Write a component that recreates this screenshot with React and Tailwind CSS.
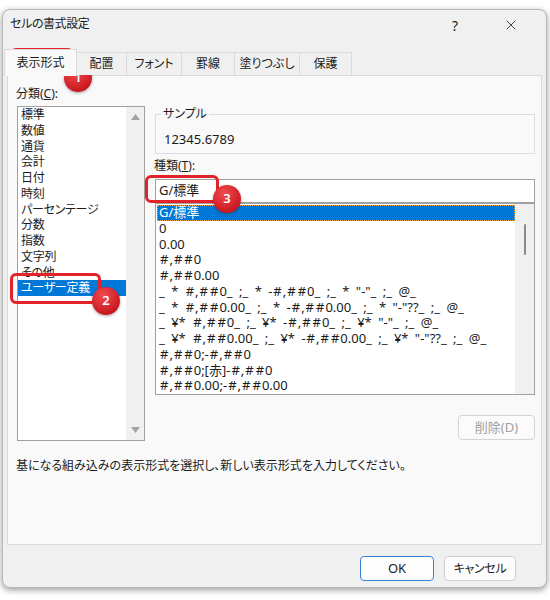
import React from 'react';
import { X } from 'lucide-react';

const categories = [
  '標準', '数値', '通貨', '会計', '日付', '時刻', 'パーセンテージ',
  '分数', '指数', '文字列', 'その他', 'ユーザー定義',
];

const formats = [
  'G/標準',
  '0',
  '0.00',
  '#,##0',
  '#,##0.00',
  '_ * #,##0_ ;_ * -#,##0_ ;_ * "-"_ ;_ @_',
  '_ * #,##0.00_ ;_ * -#,##0.00_ ;_ * "-"??_ ;_ @_',
  '_ ¥* #,##0_ ;_ ¥* -#,##0_ ;_ ¥* "-"_ ;_ @_',
  '_ ¥* #,##0.00_ ;_ ¥* -#,##0.00_ ;_ ¥* "-"??_ ;_ @_',
  '#,##0;-#,##0',
  '#,##0;[赤]-#,##0',
  '#,##0.00;-#,##0.00',
];

const tabs = [
  { label: '表示形式', w: 'w-[73px]', active: true },
  { label: '配置', w: 'w-[51px]' },
  { label: 'フォント', w: 'w-[56px]' },
  { label: '罫線', w: 'w-[54px]' },
  { label: '塗りつぶし', w: 'w-[66px]' },
  { label: '保護', w: 'w-[53px]' },
];

// '#' is drawn wide in the dialog font, pad it out a little
function FormatText({ text }) {
  const parts = text.split('#');
  return (
    <>
      {parts.map((p, i) => (
        <React.Fragment key={i}>
          {i > 0 && <span className="mx-[1px]">#</span>}
          {p}
        </React.Fragment>
      ))}
    </>
  );
}

function Marker({ n, className }) {
  return (
    <div
      className={`absolute w-[28px] h-[28px] rounded-full flex items-center justify-center text-white text-[13px] font-semibold bg-[radial-gradient(circle_at_40%_30%,#ef4b4f,#c8161d_75%)] shadow-[0_1px_3px_rgba(0,0,0,0.35)] ${className}`}
    >
      {n}
    </div>
  );
}

function Arrow({ up }) {
  return (
    <svg width="9" height="6" viewBox="0 0 9 6">
      <path d={up ? 'M0 6 L4.5 0 L9 6 Z' : 'M0 0 L4.5 6 L9 0 Z'} fill="#a3a3a3" />
    </svg>
  );
}

export default function App() {
  return (
    <div className="relative w-[550px] h-[600px] bg-white overflow-hidden pt-[9px] pl-[2px] text-[12px] text-[#1b1b1b] [font-family:'Noto_Sans','Noto_Sans_CJK_JP',sans-serif] [font-feature-settings:'palt']">
      <div className="w-[545px] h-[579px] bg-[#f0f0f0] rounded-[8px] border border-[#b9b9b9] shadow-[0_2px_6px_rgba(0,0,0,0.4)] flex flex-col overflow-hidden">
        {/* title bar */}
        <div className="h-[39px] flex items-start pr-[7px]">
          <div className="pl-[7px] pt-[6px] leading-[16px] flex-1 tracking-[-0.4px]">セルの書式設定</div>
          <div className="w-[56px] h-[30px] flex items-center justify-center text-[14px]">?</div>
          <div className="w-[56px] h-[30px] flex items-center justify-center">
            <X size={16} strokeWidth={1.2} color="#1b1b1b" />
          </div>
        </div>

        {/* tabs */}
        <div className="h-[26px] flex items-end pl-[1px] relative z-10">
          {tabs.map((t) => (
            <div
              key={t.label}
              className={`${t.w} flex items-center justify-center whitespace-nowrap border-t border-l border-r border-[#d9d9d9] -ml-px first:ml-0 ${
                t.active ? 'h-[27px] -mb-px bg-[#f9f9f9] border-b-0' : 'h-[23px] bg-[#f0f0f0]'
              }`}
            >
              {t.label}
            </div>
          ))}
        </div>

        {/* panel */}
        <div className="mx-[4px] h-[470px] border border-[#d9d9d9] bg-[#f9f9f9]">
          <div className="flex pl-[9px] pt-[8px]">
            <div className="w-[128px]">
              <div className="h-[20px] leading-[20px] -ml-px">
                分類(<span className="underline">C</span>):
              </div>
              <div className="mt-[2px] h-[335px] border border-[#a0a0a0] bg-white flex">
                <div className="flex-1">
                  {categories.map((c, i) => (
                    <div
                      key={c}
                      className={`h-[15.75px] leading-[15.75px] pl-[3px] whitespace-nowrap tracking-[-0.3px] ${
                        i === categories.length - 1 ? 'bg-[#0078d7] text-white' : ''
                      }`}
                    >
                      {c}
                    </div>
                  ))}
                </div>
                <div className="w-[18px] bg-[#f0f0f0] flex flex-col items-center justify-between py-[7px]">
                  <Arrow up />
                  <Arrow />
                </div>
              </div>
            </div>

            <div className="ml-[10px] w-[380px] mt-[22px] flex flex-col">
              <fieldset className="h-[48px] border border-[#dcdcdc] px-[8px] pb-[5px]">
                <legend className="leading-[16px] ml-[-3px] px-[2px]">サンプル</legend>
                <div className="mt-[9px] leading-[16px] text-[13px]">12345.6789</div>
              </fieldset>

              <div className="mt-[2px] h-[20px] leading-[20px] -ml-px">
                種類(<span className="underline">T</span>):
              </div>
              <div className="mt-[3px] h-[24px] border border-[#a0a0a0] bg-white flex items-center pl-[3px] text-[13px]">
                G/標準
              </div>
              <div className="h-[192px] border border-[#a0a0a0] bg-white flex text-[13px]">
                <div className="flex-1 pt-[1px] overflow-hidden">
                  {formats.map((f, i) => (
                    <div
                      key={f}
                      className={`h-[15.75px] leading-[15.75px] pl-[2px] ml-px whitespace-nowrap [word-spacing:3px] ${
                        i === 0
                          ? 'bg-[#0078d7] text-white outline outline-1 outline-dotted outline-[#f2a33a] -outline-offset-1'
                          : ''
                      }`}
                    >
                      <FormatText text={f} />
                    </div>
                  ))}
                </div>
                <div className="w-[19px] bg-[#f0f0f0] flex justify-center pt-[20px]">
                  <div className="w-[2px] h-[31px] rounded-full bg-[#8a8a8a]" />
                </div>
              </div>

              <button className="mt-[20px] self-end w-[77px] h-[25px] rounded-[4px] border border-[#d4d4d4] bg-[#fbfbfb] text-[#a0a0a0] text-[13px]">
                削除(D)
              </button>
            </div>
          </div>

          <div className="mt-[17px] pl-[8px] leading-[16px] whitespace-nowrap">
            基になる組み込みの表示形式を選択し、新しい表示形式を入力してください。
          </div>
        </div>

        {/* footer buttons */}
        <div className="flex justify-end gap-[10px] pt-[11px] pr-[30px]">
          <button className="w-[74px] h-[25px] rounded-[4px] border border-[#3b83d0] bg-[#fdfdfd] text-[13px]">OK</button>
          <button className="w-[72px] h-[25px] rounded-[4px] border border-[#d0d0d0] bg-[#fdfdfd] tracking-[-0.3px]">キャンセル</button>
        </div>
      </div>

      {/* red callouts */}
      <div className="absolute left-[10px] top-[48px] w-[64px] h-[26px] border-[3px] border-[#e2232a] rounded-[6px]" />
      <Marker n="1" className="left-[64px] top-[64px]" />
      <div className="absolute left-[10px] top-[273px] w-[91px] h-[31px] border-[3px] border-[#e2232a] rounded-[6px]" />
      <Marker n="2" className="left-[92px] top-[287px]" />
      <div className="absolute left-[145px] top-[175px] w-[74px] h-[28px] border-[3px] border-[#e2232a] rounded-[6px]" />
      <Marker n="3" className="left-[213px] top-[185px]" />
    </div>
  );
}
